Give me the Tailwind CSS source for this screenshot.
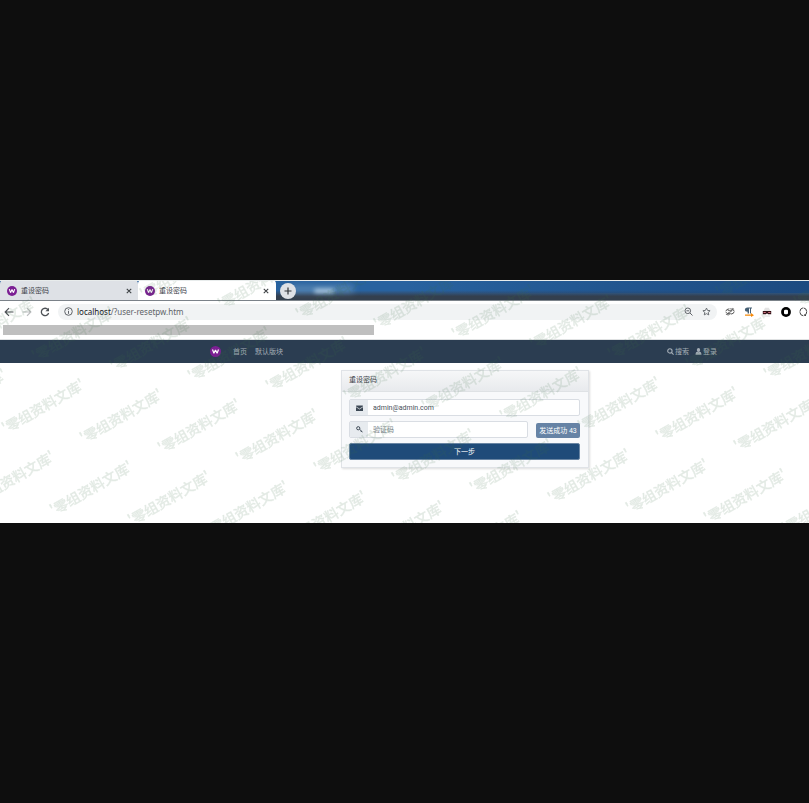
<!DOCTYPE html>
<html lang="zh-CN">
<head>
<meta charset="utf-8">
<meta name="viewport" content="width=device-width, initial-scale=1">
<title>重设密码</title>
<script src="https://cdn.jsdelivr.net/npm/@tailwindcss/browser@4"></script>
</head>
<body class="flex min-h-screen flex-col justify-center bg-[#0e0e0e] font-['Roboto','Noto_Sans_CJK_SC',sans-serif] text-[7px] leading-[10px] text-[#3c4248]">
<svg class="hidden" aria-hidden="true">
  <symbol id="logo" viewBox="0 0 24 24"><circle cx="12" cy="12" r="12" fill="#7b1f93"/><path d="M5.500 7.500L8.500 16 12 8.500 15.500 16 18.500 7.500" fill="none" stroke="#fff" stroke-width="2.600" stroke-linejoin="bevel"/></symbol>
  <symbol id="close" viewBox="0 0 10 10"><path d="M2.200 2.200l5.600 5.600M7.800 2.200L2.200 7.800" stroke="#3c4043" stroke-width="1.300"/></symbol>
</svg>
<div class="relative h-[243px] overflow-hidden border-t border-[#e8ecec] bg-white">
  <header>
    <div class="relative flex h-5 items-end overflow-hidden border-b border-[#7b8289] bg-linear-to-b from-[#28629f] from-50% to-[#333f4e] to-80%">
      <div class="absolute top-0 right-0 h-3 w-1/2 bg-linear-to-r from-transparent to-[#1c4a80]"></div>
      <div class="absolute top-1 left-[290px] h-2 w-16 rounded-full bg-[#7fa3c4]/50 blur-[3px]"></div>
      <div class="absolute top-[8px] left-[314px] h-1 w-5 rounded-full bg-[#cfe4f2]/80 blur-[2px]"></div>
      <div class="relative flex h-5 w-[138px] items-center gap-1 rounded-t bg-[#dee1e6] pt-px pr-[5px] pl-[7px]">
        <svg class="size-[10px]"><use href="#logo"/></svg>
        <span class="flex-1">重设密码</span>
        <button aria-label="关闭标签页" class="flex"><svg class="size-2"><use href="#close"/></svg></button>
      </div>
      <div class="relative flex h-5 w-[138px] items-center gap-1 rounded-t bg-white pt-px pr-[6px] pl-[7px]">
        <svg class="size-[10px]"><use href="#logo"/></svg>
        <span class="flex-1">重设密码</span>
        <button aria-label="关闭标签页" class="flex"><svg class="size-2"><use href="#close"/></svg></button>
      </div>
      <button aria-label="新标签页" class="relative mb-px ml-1 flex size-4 items-center justify-center rounded-full bg-[#dee1e6]"><svg class="size-2" viewBox="0 0 8 8"><path d="M4 .5v7M.5 4h7" stroke="#303438" stroke-width="1.200"/></svg></button>
    </div>
    <div class="flex h-[21px] items-center gap-2 pl-1">
      <button aria-label="后退"><svg class="size-[10px]" viewBox="0 0 10 10" fill="none" stroke="#4d5156" stroke-width="1.200"><path d="M9.500 5H1.200M5 1.200L1.200 5 5 8.800"/></svg></button>
      <button aria-label="前进"><svg class="size-[10px]" viewBox="0 0 10 10" fill="none" stroke="#babcbe" stroke-width="1.200"><path d="M.5 5h8.300M5 1.200L8.800 5 5 8.800"/></svg></button>
      <button aria-label="重新加载"><svg class="size-[10px]" viewBox="0 0 10 10"><path d="M8 2.700A3.700 3.700 0 1 0 8.600 6" fill="none" stroke="#4d5156" stroke-width="1.300"/><path d="M9 .7v3.600H5.400z" fill="#4d5156"/></svg></button>
      <div class="flex h-4 min-w-0 flex-1 items-center gap-1 rounded-full bg-[#f1f3f4] pr-[6px] pl-[6px]">
        <svg class="size-[9px]" viewBox="0 0 9 9" fill="none" stroke="#5f6368"><circle cx="4.500" cy="4.500" r="3.800"/><path d="M4.500 4v2.800M4.500 2.200v1"/></svg>
        <div aria-label="地址" class="min-w-0 flex-1 font-['Noto_Sans',sans-serif] text-[8px] text-[#5f6368]"><span class="text-[#202124]">localhost</span>/?user-resetpw.htm</div>
        <svg class="mr-[5px] size-[9px]" viewBox="0 0 9 9" fill="none" stroke="#5f6368"><circle cx="3.800" cy="3.800" r="2.800"/><path d="M6 6l2.500 2.500M2.400 3.800h2.800"/></svg>
        <svg class="size-[9px]" viewBox="0 0 10 10" fill="none" stroke="#5f6368"><path d="M5 1.200l1.200 2.600 2.800.3-2.100 1.900.6 2.800L5 7.400 2.500 8.800 3.100 6 1 4.100l2.800-.3z"/></svg>
      </div>
      <div class="flex w-[84px] items-center justify-between overflow-hidden">
        <svg class="h-[9px] w-[10px]" viewBox="0 0 11 9" fill="none" stroke="#444"><ellipse cx="5.500" cy="4.500" rx="4.600" ry="3" stroke-dasharray="5 1"/><path d="M3 3.500h5L3 6.500h3.500M8 1l2 1M1 7.500l3 1" stroke-width=".8"/></svg>
        <svg class="size-[10px]" viewBox="0 0 10 10"><path d="M3.600 4.800C0 4.800 0 .5 3.600.5H8v1H7v5H6v-5H5v5H3.600z" fill="#466075"/><path d="M1 7.500h6V6l3 2.200L7 10V8.700H1z" fill="#f58a0b"/></svg>
        <svg class="size-[10px]" viewBox="0 0 10 10"><path d="M1.500 4L3 .8h3.800L8.500 4z" fill="#e4e4e4"/><path d="M.8 4h8.400v3.200H6L5 6.300l-1 .9H.8z" fill="#301015"/><path d="M1.500 5.500h2.300M6.200 5.500h2.300" stroke="#d27583"/><path d="M2 9h6" stroke="#ddd"/></svg>
        <svg class="size-[10px]" viewBox="0 0 10 10"><circle cx="5" cy="5" r="4.900"/><rect x="3" y="2.800" width="4" height="4.400" rx="1.200" fill="#fff"/></svg>
        <svg class="size-[10px]" viewBox="0 0 10 10" fill="none" stroke="#444"><ellipse cx="4.300" cy="4.800" rx="3.400" ry="3.900" stroke-dasharray="5 .7"/><path d="M5.500 7.500L7 9"/></svg>
      </div>
    </div>
    <div class="border-b border-[#dfe1e2] pt-[3px] pb-1 pl-[3px]"><div class="h-[10px] w-[46%] bg-[#bfbfbf]"></div></div>
  </header>

  <nav class="flex h-[23px] items-center bg-[#2b3d51] pr-[92px] pl-[210px] text-[#a4adb6]">
    <a href="#" aria-label="首页" class="mr-3"><svg class="size-[11px]"><use href="#logo"/></svg></a>
    <a href="#" class="mr-2">首页</a>
    <a href="#">默认版块</a>
    <a href="#" class="ml-auto flex items-center gap-px"><svg class="size-[7px]" viewBox="0 0 8 8" fill="none" stroke="currentColor" stroke-width="1.300"><circle cx="3.300" cy="3.300" r="2.500"/><path d="M5 5l2.500 2.500"/></svg>搜索</a>
    <a href="#" class="ml-[6px] flex items-center gap-px"><svg class="size-[7px]" viewBox="0 0 8 8" fill="currentColor"><ellipse cx="4" cy="2.300" rx="1.900" ry="2.200"/><path d="M.6 7.800c0-2.500.8-3.300 2-3.500.9.600 1.900.6 2.800 0 1.200.2 2 1 2 3.500z"/></svg>登录</a>
  </nav>

  <main class="pt-[7px] pr-[220px] pl-[341px]">
    <form class="border border-[#e0e3e7] bg-[#f8f9fb] shadow-[1px_1px_2px_#0002]">
      <h1 class="h-[21px] border-b border-[#dfe2e5] bg-linear-to-b from-[#f6f7f8] to-[#e8eaed] px-[7px] leading-[19px]">重设密码</h1>
      <div class="flex flex-col gap-[5px] py-[7px] pr-2 pl-[7px]">
        <label class="flex h-[17px] overflow-hidden rounded-xs border border-[#d9dde3] bg-white">
          <span class="flex w-[18px] items-center justify-center bg-[#e7ebef]"><svg class="h-[6px] w-[7px]" viewBox="0 0 14 12"><rect y="1" width="14" height="11" rx="1" fill="#3c4854"/><path d="M0 3.500l7 4.500 7-4.500" fill="none" stroke="#e7ebef" stroke-width="1.500"/></svg></span>
          <input type="email" aria-label="邮箱" value="admin@admin.com" class="min-w-0 flex-1 px-[5px] text-[#49515a] outline-none">
        </label>
        <div class="flex items-end gap-2">
          <label class="flex h-[17px] min-w-0 flex-1 overflow-hidden rounded-xs border border-[#d9dde3] bg-white">
            <span class="flex w-[18px] items-center justify-center bg-[#e7ebef]"><svg class="size-[7px]" viewBox="0 0 14 14" fill="none" stroke="#3c4854" stroke-width="2"><circle cx="4.500" cy="4.500" r="3.200"/><path d="M7 6.500l6 5.500M9.500 12l2-2"/></svg></span>
            <input type="text" aria-label="验证码" placeholder="验证码" class="min-w-0 flex-1 px-[5px] outline-none placeholder:text-[#7c858e]">
          </label>
          <button type="button" class="h-[15px] w-[44px] rounded-xs bg-[#6683a5] whitespace-nowrap text-white">发送成功 43</button>
        </div>
        <button type="button" class="h-[17px] rounded-xs border border-[#6985a3] bg-[#1f4b79] text-white">下一步</button>
      </div>
    </form>
  </main>

  <svg id="watermark" class="pointer-events-none absolute inset-0 size-full font-['Noto_Sans_CJK_SC',sans-serif] text-[14px] font-medium" fill="#3c6e46" stroke="#3c6e46" stroke-width=".3" opacity=".14" aria-hidden="true"></svg>
</div>
<script>
  const layer = document.getElementById('watermark');
  for (let row = -5; row <= 5; row++) {
    for (let col = -6; col <= 16; col++) {
      const x = 6 + col * 78 - row * 30, y = 153 + col * 10 + row * 72;
      if (x < -80 || x > window.innerWidth || y < 12 || y > 290) continue;
      const mark = document.createElementNS('http://www.w3.org/2000/svg', 'text');
      mark.setAttribute('transform', `translate(${x} ${y}) rotate(-30)`);
      mark.textContent = "'零组资料文库'";
      layer.append(mark);
    }
  }
</script>
</body>
</html>
